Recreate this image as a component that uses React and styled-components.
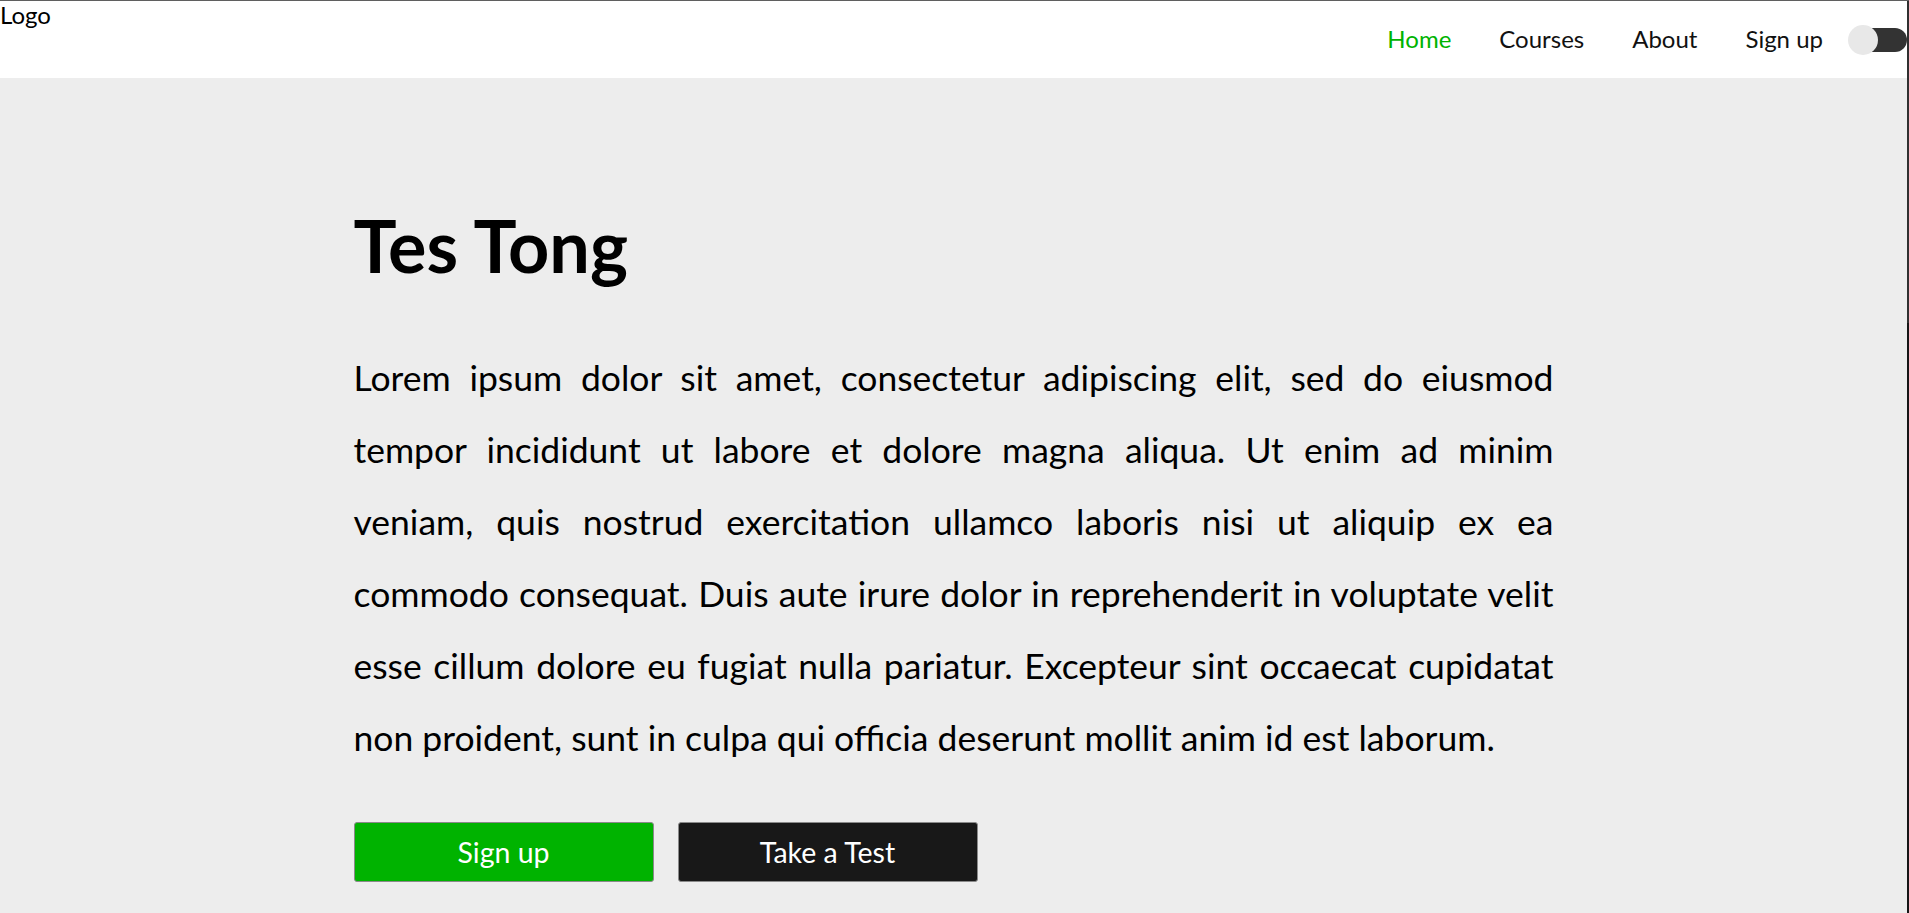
import React, { useState } from "react";
import styled, { createGlobalStyle } from "styled-components";

const GlobalStyle = createGlobalStyle`
  * {
    box-sizing: border-box;
  }

  html,
  body {
    margin: 0;
    padding: 0;
    background: #ededed;
    font-family: Lato, "Open Sans", Arial, sans-serif;
    color: #000;
    overflow: hidden;
  }
`;

const Frame = styled.div`
  display: flex;
  min-height: 100vh;
  border-top: 1px solid #5f5f5f;
`;

const Page = styled.div`
  flex: 1;
  min-width: 0;
  display: flex;
  flex-direction: column;
`;

const Edge = styled.div`
  width: 2px;
  flex-shrink: 0;
  background: linear-gradient(#303030 0 322px, #161616 322px);
`;

const Header = styled.header`
  height: 77px;
  background: #fff;
  display: flex;
  justify-content: space-between;
  align-items: center;
`;

const Logo = styled.div`
  align-self: flex-start;
  font-size: 24px;
  line-height: 1.2;
`;

const Nav = styled.nav`
  display: flex;
  align-items: center;
  gap: 25px;
`;

const Links = styled.ul`
  display: flex;
  align-items: center;
  gap: 48px;
  list-style: none;
  margin: 0;
  padding: 0;
`;

const NavLink = styled.a`
  font-size: 24px;
  line-height: 1.2;
  text-decoration: none;
  cursor: pointer;
  color: ${(p) => (p.$active ? "#00b300" : "#111")};
`;

const Switch = styled.button`
  position: relative;
  width: 59px;
  height: 30px;
  padding: 0;
  border: none;
  background: none;
  display: flex;
  align-items: center;
  cursor: pointer;
`;

const Track = styled.span`
  margin-left: 9px;
  width: 50px;
  height: 24px;
  border-radius: 12px;
  background: ${(p) => (p.$on ? "#00b300" : "#333")};
`;

const Knob = styled.span`
  position: absolute;
  top: 0;
  left: ${(p) => (p.$on ? "29px" : "0")};
  width: 30px;
  height: 30px;
  border-radius: 50%;
  background: #e8e8e8;
  transition: left 0.2s ease;
`;

const Main = styled.main`
  flex: 1;
  background: #ededed;
  padding: 124px 0 60px;
`;

const Content = styled.section`
  max-width: 1200px;
  margin: 0 auto;
`;

const Title = styled.h1`
  margin: 0;
  font-size: 72px;
  font-weight: 700;
  line-height: 1.2;
`;

const Text = styled.p`
  margin: 54px 0 0;
  font-size: 35.5px;
  line-height: 72px;
  text-align: justify;
`;

const Actions = styled.div`
  display: flex;
  gap: 24px;
  margin-top: 48px;
`;

const Button = styled.button`
  width: 300px;
  height: 60px;
  border: 1px solid #8a8a8a;
  border-radius: 3px;
  font-family: inherit;
  font-size: 28.5px;
  color: #fff;
  cursor: pointer;
  background: ${(p) => (p.$variant === "dark" ? "#181818" : "#00b300")};
`;

const links = ["Home", "Courses", "About", "Sign up"];

export default function App() {
  const [dark, setDark] = useState(false);

  return (
    <>
      <GlobalStyle />
      <Frame>
        <Page>
          <Header>
            <Logo>Logo</Logo>
            <Nav>
              <Links>
                {links.map((label, i) => (
                  <li key={label}>
                    <NavLink $active={i === 0}>{label}</NavLink>
                  </li>
                ))}
              </Links>
              <Switch onClick={() => setDark((d) => !d)} aria-label="Toggle theme">
                <Track $on={dark} />
                <Knob $on={dark} />
              </Switch>
            </Nav>
          </Header>
          <Main>
            <Content>
              <Title>Tes Tong</Title>
              <Text>
                Lorem ipsum dolor sit amet, consectetur adipiscing elit, sed do
                eiusmod tempor incididunt ut labore et dolore magna aliqua. Ut
                enim ad minim veniam, quis nostrud exercitation ullamco laboris
                nisi ut aliquip ex ea commodo consequat. Duis aute irure dolor in
                reprehenderit in voluptate velit esse cillum dolore eu fugiat
                nulla pariatur. Excepteur sint occaecat cupidatat non proident,
                sunt in culpa qui officia deserunt mollit anim id est laborum.
              </Text>
              <Actions>
                <Button>Sign up</Button>
                <Button $variant="dark">Take a Test</Button>
              </Actions>
            </Content>
          </Main>
        </Page>
        <Edge />
      </Frame>
    </>
  );
}
